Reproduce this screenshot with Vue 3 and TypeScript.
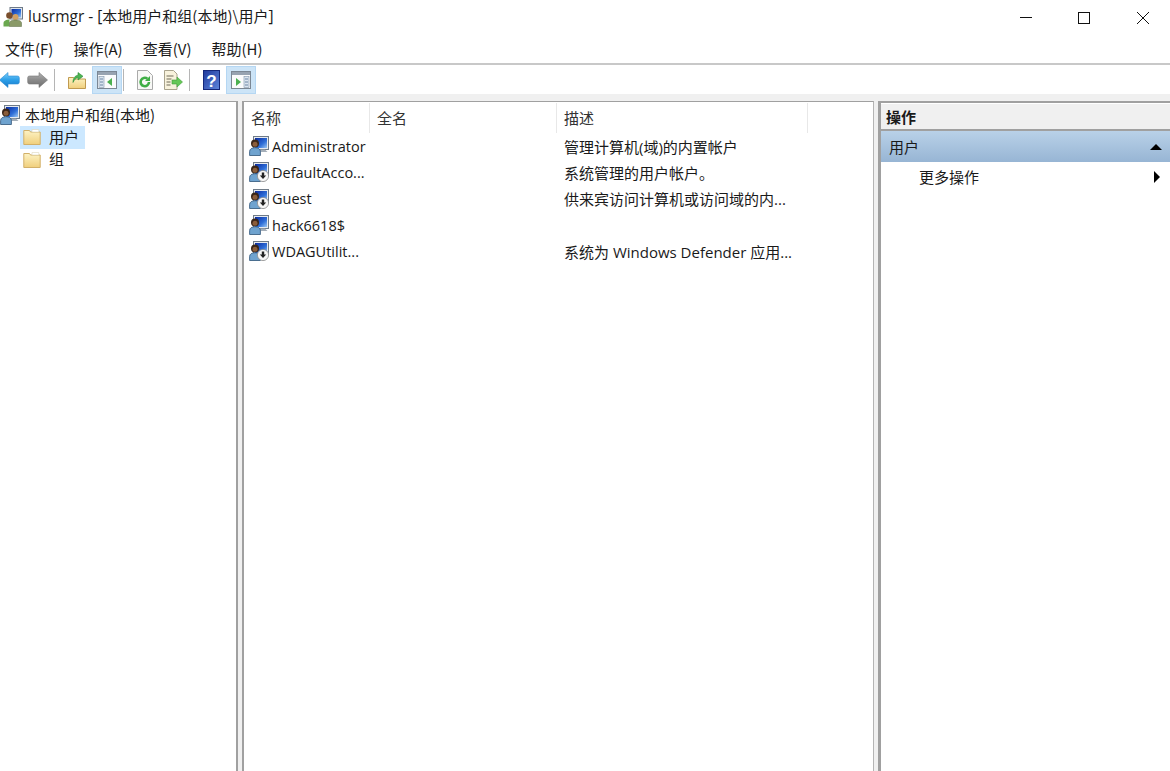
<script setup lang="ts">
const menus: string[] = ['文件(F)', '操作(A)', '查看(V)', '帮助(H)']
interface UserRow { name: string; desc: string; disabled: boolean }
const users: UserRow[] = [
  { name: 'Administrator', desc: '管理计算机(域)的内置帐户', disabled: false },
  { name: 'DefaultAcco...', desc: '系统管理的用户帐户。', disabled: true },
  { name: 'Guest', desc: '供来宾访问计算机或访问域的内...', disabled: true },
  { name: 'hack6618$', desc: '', disabled: false },
  { name: 'WDAGUtilit...', desc: '系统为 Windows Defender 应用...', disabled: true },
]
</script>

<template>
  <div class="win">
    <svg width="0" height="0" class="defs">
      <defs>
        <linearGradient id="fold" x1="0" y1="0" x2="0" y2="1">
          <stop offset="0" stop-color="#fdf3c4" />
          <stop offset="1" stop-color="#f0cf7c" />
        </linearGradient>
        <linearGradient id="scr" x1="0" y1="0" x2="1" y2="1">
          <stop offset="0" stop-color="#0a2aa0" />
          <stop offset=".6" stop-color="#2f6fd8" />
          <stop offset="1" stop-color="#9cc8f4" />
        </linearGradient>
        <linearGradient id="blueArrow" x1="0" y1="0" x2="0" y2="1">
          <stop offset="0" stop-color="#7fd0fa" />
          <stop offset=".5" stop-color="#2c9fe8" />
          <stop offset="1" stop-color="#1878c8" />
        </linearGradient>
        <linearGradient id="grayArrow" x1="0" y1="0" x2="0" y2="1">
          <stop offset="0" stop-color="#b4b4b4" />
          <stop offset=".5" stop-color="#8a8a8a" />
          <stop offset="1" stop-color="#6f6f6f" />
        </linearGradient>
        <linearGradient id="helpG" x1="0" y1="0" x2="1" y2="1">
          <stop offset="0" stop-color="#1f3a9c" />
          <stop offset="1" stop-color="#5f86dc" />
        </linearGradient>
        <symbol id="folder" viewBox="0 0 18 18">
          <path d="M.8 2.500h5.700l1 1.500h9.700v12.500H.8z" fill="url(#fold)" stroke="#d2b069" />
          <path d="M9 1.500h6.800V4H9z" fill="#fff" stroke="#ddd6ba" stroke-width=".6" />
        </symbol>
        <symbol id="user" viewBox="0 0 20 20">
          <rect x="4.500" y=".5" width="15" height="13" fill="#e6eaef" stroke="#6f7b88" />
          <rect x="6" y="2" width="12" height="10" fill="url(#scr)" />
          <path d="M11 13.500h5l2.500 2.500h-7.500z" fill="#a4aeb8" />
          <circle cx="6" cy="7.500" r="4" fill="#3a2618" />
          <path d="M.6 19.500v-4c0-2.500 2.400-3.800 5.400-3.800s5.400 1.300 5.400 3.800v4z" fill="#6fa3cf" stroke="#2f5478" stroke-width=".8" />
          <circle cx="6" cy="8.300" r="2.500" fill="#8a5d3a" />
        </symbol>
        <symbol id="userOff" viewBox="0 0 20 20">
          <use href="#user" width="20" height="20" />
          <circle cx="14" cy="14" r="5.600" fill="#f6f6f6" stroke="#8c8c8c" stroke-width=".8" />
          <path d="M12.800 10.400h2.400v3h2l-3.200 3.500-3.200-3.500h2z" fill="#222" />
        </symbol>
      </defs>
    </svg>

    <header class="title">
      <svg class="appicon" viewBox="0 0 20 20" width="20" height="20">
        <rect x="7" y=".5" width="12.500" height="11.500" fill="#dfe5ec" stroke="#6e7a88" />
        <rect x="8.500" y="2" width="9.500" height="8.500" fill="url(#scr)" />
        <circle cx="6.500" cy="8.500" r="3.300" fill="#7a4e2c" />
        <circle cx="12.500" cy="10" r="3" fill="#d0a063" />
        <path d="M.5 19.500v-3.500c0-2.300 2.800-3.500 6-3.500v7z" fill="#6aa84f" />
        <path d="M6.500 19.500V16c0-2 2.600-3 6-3s6 1 6 3v3.500z" fill="#8a9a68" stroke="#5a6b42" stroke-width=".5" />
      </svg>
      <span class="title-text">lusrmgr - [<span class="zh">本地用户和组(本地)\用户</span>]</span>
      <div class="caption">
        <svg viewBox="0 0 58 32" width="58" height="32"><path d="M24 16.500h12" stroke="#111" fill="none" /></svg>
        <svg viewBox="0 0 58 32" width="58" height="32"><rect x="24.500" y="11.500" width="11" height="11" stroke="#111" fill="none" /></svg>
        <svg viewBox="0 0 58 32" width="58" height="32"><path d="M25 11l12 12M37 11L25 23" stroke="#111" fill="none" /></svg>
      </div>
    </header>

    <nav class="menu">
      <span v-for="m in menus" :key="m" class="menu-item zh">{{ m }}</span>
    </nav>

    <div class="toolbar">
      <svg class="tool arrow" viewBox="0 0 21 20" width="21" height="20">
        <path d="M.5 10L9 2.500V6h9.500q1.800 0 1.800 1.800v4.400q0 1.800-1.800 1.800H9v3.500z" fill="url(#blueArrow)" stroke="#2a8bd4" stroke-width=".6" />
      </svg>
      <svg class="tool arrow" viewBox="0 0 22 20" width="22" height="20">
        <path d="M21.500 10L13 2.500V6H3.500Q1.700 6 1.700 7.800v4.400Q1.700 14 3.500 14H13v3.500z" fill="url(#grayArrow)" stroke="#777" stroke-width=".6" />
      </svg>
      <i class="sep"></i>
      <svg class="tool up" viewBox="0 0 20 20" width="20" height="20">
        <path d="M1.500 7.500h5l1.500 1.500h10.500v9.500H1.500z" fill="url(#fold)" stroke="#c09a50" />
        <path d="M6 12.500c0-4.500 2-6.800 5-7.300V2.500l5 3.800-5 3.700V7.500c-2 .3-3.500 2-5 5z" fill="#4cb552" stroke="#2d8a34" stroke-width=".6" />
      </svg>
      <span class="toggle">
        <svg viewBox="0 0 20 18" width="20" height="18">
          <rect x=".5" y=".5" width="19" height="17" fill="#fafbfc" stroke="#7b8794" />
          <rect x="1" y="1" width="18" height="3" fill="#97a3b1" />
          <rect x="2" y="5.500" width="5" height="11" fill="#dbe5f0" stroke="#8195ab" stroke-width=".6" />
          <path d="M3 8h3M3 11h3M3 14h3" stroke="#6c86a4" />
          <path d="M15 7v8l-5-4z" fill="#4bb050" />
        </svg>
      </span>
      <i class="sep sep2"></i>
      <svg class="tool refresh" viewBox="0 0 18 20" width="18" height="20">
        <path d="M1.500 .5h10l5 5v14h-15z" fill="#f8f8f6" stroke="#aaa" />
        <path d="M13 12a4.200 4.200 0 1 1-1.600-3.300" fill="none" stroke="#3fae45" stroke-width="2.600" />
        <path d="M14 6v5H9z" fill="#3fae45" />
      </svg>
      <svg class="tool export" viewBox="0 0 20 20" width="20" height="20">
        <path d="M1.500 .5h9l3.500 3.500V19.500H1.500z" fill="#f8f2dc" stroke="#a9a38c" />
        <path d="M3.500 6h7M3.500 9h5M3.500 12h4M3.500 15h4" stroke="#6e6a58" />
        <path d="M9 10h5V7l5.500 5-5.500 5v-3H9z" fill="#66c756" stroke="#3f9f3b" stroke-width=".6" />
      </svg>
      <i class="sep sep3"></i>
      <svg class="tool help" viewBox="0 0 17 20" width="17" height="20">
        <rect x=".5" y=".5" width="16" height="19" fill="url(#helpG)" stroke="#15287a" />
        <text x="8.500" y="16.500" text-anchor="middle" font-size="17" font-weight="700" font-family="Liberation Sans, sans-serif" fill="#fff">?</text>
      </svg>
      <span class="toggle toggle2">
        <svg viewBox="0 0 20 18" width="20" height="18">
          <rect x=".5" y=".5" width="19" height="17" fill="#fafbfc" stroke="#7b8794" />
          <rect x="1" y="1" width="18" height="3" fill="#97a3b1" />
          <rect x="13" y="5.500" width="5" height="11" fill="#dbe5f0" stroke="#8195ab" stroke-width=".6" />
          <path d="M14 8h3M14 11h3M14 14h3" stroke="#6c86a4" />
          <path d="M5 7v8l5-4z" fill="#4bb050" />
        </svg>
      </span>
    </div>

    <main class="panes">
      <aside class="tree pane">
        <div class="tree-root">
          <svg class="tree-icon" width="20" height="20"><use href="#user" /></svg>
          <span class="zh">本地用户和组(本地)</span>
        </div>
        <div class="tree-node selected">
          <svg width="18" height="18"><use href="#folder" /></svg>
          <span class="node-label zh">用户</span>
        </div>
        <div class="tree-node">
          <svg width="18" height="18"><use href="#folder" /></svg>
          <span class="node-label zh">组</span>
        </div>
      </aside>

      <section class="list pane">
        <div class="thead">
          <span class="th c1 zh">名称</span>
          <span class="th c2 zh">全名</span>
          <span class="th c3 zh">描述</span>
        </div>
        <div v-for="u in users" :key="u.name" class="row">
          <span class="c1 cell-name">
            <svg width="20" height="20"><use :href="u.disabled ? '#userOff' : '#user'" /></svg>
            <span>{{ u.name }}</span>
          </span>
          <span class="c2"></span>
          <span class="c3 cell-desc">{{ u.desc }}</span>
        </div>
      </section>

      <aside class="actions pane">
        <div class="act-head zh">操作</div>
        <div class="act-group zh">
          <span>用户</span>
          <i class="tri-up"></i>
        </div>
        <div class="act-item zh">
          <span class="act-label">更多操作</span>
          <i class="tri-right"></i>
        </div>
      </aside>
    </main>
  </div>
</template>

<style>
html, body { margin: 0; padding: 0; overflow: hidden; }
</style>

<style scoped>
.win {
  width: 1170px;
  height: 771px;
  display: flex;
  flex-direction: column;
  background: #f0f0f0;
  font-family: "Open Sans", "Noto Sans CJK SC", sans-serif;
  font-size: 14.5px;
  color: #1a1a1a;
  overflow: hidden;
}
.zh {
  font-family: "Noto Sans CJK SC", "Open Sans", sans-serif;
  font-size: 15px;
}
.defs { position: absolute; }
.title {
  height: 33px;
  flex: none;
  display: flex;
  align-items: center;
  background: #fff;
  padding-left: 3px;
  font-size: 15.5px;
}
.appicon { flex: none; }
.title-text { margin-left: 5px; margin-top: -2px; }
.caption { margin-left: auto; display: flex; }
.caption svg { display: block; }
.menu {
  height: 32px;
  flex: none;
  display: flex;
  align-items: center;
  background: #fff;
  padding: 1px 0 0 5px;
  box-sizing: border-box;
  gap: 20px;
  border-bottom: 2px solid #c8c8c8;
}
.menu-item { white-space: nowrap; }
.toolbar {
  height: 29px;
  flex: none;
  display: flex;
  align-items: center;
  background: #fff;
}
.tool { flex: none; display: block; }
.arrow:first-child { margin-left: -1px; }
.arrow + .arrow { margin-left: 6px; }
.sep {
  width: 1px;
  height: 22px;
  background: #b5b5b5;
  margin: 0 12px 0 6px;
  flex: none;
}
.up { margin-right: 5px; }
.toggle {
  width: 30px;
  height: 28px;
  flex: none;
  display: flex;
  align-items: center;
  justify-content: center;
  background: #cce4f7;
  border: 1px solid #b5d7f3;
  box-sizing: border-box;
}
.sep2 { margin: 0 8px 0 1px; }
.refresh { margin-left: 4px; }
.export { margin-left: 9px; }
.sep3 { margin: 0 13px 0 6px; }
.toggle2 { margin-left: 6px; }
.panes {
  flex: 1;
  min-height: 0;
  display: flex;
  gap: 4px;
  margin-top: 7px;
  background: #f0f0f0;
}
.pane {
  background: #fff;
  box-sizing: border-box;
  border-top: 1px solid #a0a0a0;
  min-height: 0;
}
.tree {
  width: 238px;
  flex: none;
  border-right: 2px solid #a0a0a0;
  padding-top: 1px;
}
.tree-root {
  display: flex;
  align-items: center;
  height: 23px;
}
.tree-root span { margin-left: 5px; padding-bottom: 1px; }
.tree-icon { flex: none; }
.tree-node {
  display: flex;
  align-items: center;
  height: 22.500px;
  width: 65px;
  margin-left: 20px;
  padding-left: 3px;
  box-sizing: border-box;
}
.tree-node svg { flex: none; }
.node-label { margin-left: 8px; padding-bottom: 2px; }
.selected { background: #cce8ff; }
.list {
  width: 632px;
  flex: none;
  border-left: 2px solid #a0a0a0;
  border-right: 1px solid #b4b4b4;
}
.thead {
  display: flex;
  height: 31px;
  padding-top: 1px;
  box-sizing: border-box;
  align-items: center;
}
.th {
  height: 100%;
  display: flex;
  align-items: center;
  border-right: 1px solid #e8e8e8;
  box-sizing: border-box;
  padding-left: 7px;
  padding-bottom: 1px;
  color: #333;
}
.c1 { width: 126px; flex: none; }
.c2 { width: 187px; flex: none; }
.c3 { width: 251px; flex: none; }
.row {
  display: flex;
  align-items: center;
  height: 26.300px;
  white-space: nowrap;
}
.cell-name {
  display: flex;
  align-items: center;
  padding-left: 5px;
  box-sizing: border-box;
  gap: 3px;
}
.cell-name svg { flex: none; }
.cell-desc { padding-left: 7px; box-sizing: border-box; font-size: 15px; }
.actions {
  flex: 1;
  border-top: 2px solid #a0a0a0;
  border-left: 3px solid #a0a0a0;
}
.act-head {
  height: 28px;
  background: #f0f0f0;
  border-bottom: 2px solid #a0a0a0;
  border-top: 1px solid #fff;
  padding-left: 5px;
  display: flex;
  align-items: center;
  font-weight: 700;
  box-sizing: border-box;
}
.act-group {
  height: 32px;
  background: linear-gradient(#b9d1e8, #97b5d4);
  padding: 0 6px 0 8px;
  display: flex;
  align-items: center;
  justify-content: space-between;
  border-bottom: 1px solid #fff;
  box-sizing: border-box;
}
.tri-up {
  width: 0;
  height: 0;
  border-left: 6px solid transparent;
  border-right: 6px solid transparent;
  border-bottom: 6px solid #000;
  margin-right: 2px;
}
.act-item {
  height: 28px;
  display: flex;
  align-items: center;
  justify-content: space-between;
  padding: 0 10px 0 38px;
  box-sizing: border-box;
}
.act-label { padding-bottom: 2px; }
.tri-right {
  width: 0;
  height: 0;
  border-top: 6px solid transparent;
  border-bottom: 6px solid transparent;
  border-left: 6px solid #000;
}
</style>
